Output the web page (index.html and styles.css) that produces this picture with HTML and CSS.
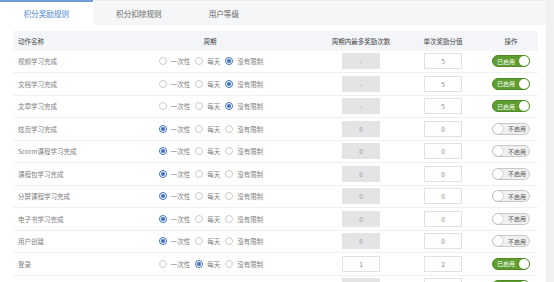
FILE: index.html
```html
<!DOCTYPE html>
<html lang="zh">
<head>
<meta charset="utf-8">
<link rel="stylesheet" href="styles.css">
</head>
<body>
<div class="page">
  <div class="main">
    <div class="tabs">
      <div class="tab active">积分奖励规则</div>
      <div class="tab">积分扣除规则</div>
      <div class="tab">用户等级</div>
    </div>
    <div class="content">
      <div class="table">
        <div class="row head">
          <div class="c-name">动作名称</div>
          <div class="c-center">周期</div>
          <div class="c-center">周期内最多奖励次数</div>
          <div class="c-center">单次奖励分值</div>
          <div class="c-center">操作</div>
        </div>

        <div class="row">
          <div class="c-name">视频学习完成</div>
          <div class="c-center radios"><span class="radio"></span><span>一次性</span><span class="radio"></span><span>每天</span><span class="radio on"></span><span>没有限制</span></div>
          <div class="c-center"><span class="box dis">-</span></div>
          <div class="c-center"><span class="box">5</span></div>
          <div class="c-center"><span class="switch on"><span class="lbl">已启用</span><span class="knob"></span></span></div>
        </div>
        <div class="row">
          <div class="c-name">文档学习完成</div>
          <div class="c-center radios"><span class="radio"></span><span>一次性</span><span class="radio"></span><span>每天</span><span class="radio on"></span><span>没有限制</span></div>
          <div class="c-center"><span class="box dis">-</span></div>
          <div class="c-center"><span class="box">5</span></div>
          <div class="c-center"><span class="switch on"><span class="lbl">已启用</span><span class="knob"></span></span></div>
        </div>
        <div class="row">
          <div class="c-name">文章学习完成</div>
          <div class="c-center radios"><span class="radio"></span><span>一次性</span><span class="radio"></span><span>每天</span><span class="radio on"></span><span>没有限制</span></div>
          <div class="c-center"><span class="box dis">-</span></div>
          <div class="c-center"><span class="box">5</span></div>
          <div class="c-center"><span class="switch on"><span class="lbl">已启用</span><span class="knob"></span></span></div>
        </div>
        <div class="row">
          <div class="c-name">炫页学习完成</div>
          <div class="c-center radios"><span class="radio on"></span><span>一次性</span><span class="radio"></span><span>每天</span><span class="radio"></span><span>没有限制</span></div>
          <div class="c-center"><span class="box dis">0</span></div>
          <div class="c-center"><span class="box">0</span></div>
          <div class="c-center"><span class="switch"><span class="knob"></span><span class="lbl">不启用</span></span></div>
        </div>
        <div class="row">
          <div class="c-name">Scorm课程学习完成</div>
          <div class="c-center radios"><span class="radio on"></span><span>一次性</span><span class="radio"></span><span>每天</span><span class="radio"></span><span>没有限制</span></div>
          <div class="c-center"><span class="box dis">0</span></div>
          <div class="c-center"><span class="box">0</span></div>
          <div class="c-center"><span class="switch"><span class="knob"></span><span class="lbl">不启用</span></span></div>
        </div>
        <div class="row">
          <div class="c-name">课程包学习完成</div>
          <div class="c-center radios"><span class="radio on"></span><span>一次性</span><span class="radio"></span><span>每天</span><span class="radio"></span><span>没有限制</span></div>
          <div class="c-center"><span class="box dis">0</span></div>
          <div class="c-center"><span class="box">0</span></div>
          <div class="c-center"><span class="switch"><span class="knob"></span><span class="lbl">不启用</span></span></div>
        </div>
        <div class="row">
          <div class="c-name">分屏课程学习完成</div>
          <div class="c-center radios"><span class="radio on"></span><span>一次性</span><span class="radio"></span><span>每天</span><span class="radio"></span><span>没有限制</span></div>
          <div class="c-center"><span class="box dis">0</span></div>
          <div class="c-center"><span class="box">0</span></div>
          <div class="c-center"><span class="switch"><span class="knob"></span><span class="lbl">不启用</span></span></div>
        </div>
        <div class="row">
          <div class="c-name">电子书学习完成</div>
          <div class="c-center radios"><span class="radio on"></span><span>一次性</span><span class="radio"></span><span>每天</span><span class="radio"></span><span>没有限制</span></div>
          <div class="c-center"><span class="box dis">0</span></div>
          <div class="c-center"><span class="box">0</span></div>
          <div class="c-center"><span class="switch"><span class="knob"></span><span class="lbl">不启用</span></span></div>
        </div>
        <div class="row">
          <div class="c-name">用户创建</div>
          <div class="c-center radios"><span class="radio on"></span><span>一次性</span><span class="radio"></span><span>每天</span><span class="radio"></span><span>没有限制</span></div>
          <div class="c-center"><span class="box dis">0</span></div>
          <div class="c-center"><span class="box">0</span></div>
          <div class="c-center"><span class="switch"><span class="knob"></span><span class="lbl">不启用</span></span></div>
        </div>
        <div class="row">
          <div class="c-name">登录</div>
          <div class="c-center radios"><span class="radio"></span><span>一次性</span><span class="radio on"></span><span>每天</span><span class="radio"></span><span>没有限制</span></div>
          <div class="c-center"><span class="box">1</span></div>
          <div class="c-center"><span class="box">2</span></div>
          <div class="c-center"><span class="switch on"><span class="lbl">已启用</span><span class="knob"></span></span></div>
        </div>
        <div class="row">
          <div class="c-name">签到</div>
          <div class="c-center radios"><span class="radio"></span><span>一次性</span><span class="radio on"></span><span>每天</span><span class="radio"></span><span>没有限制</span></div>
          <div class="c-center"><span class="box dis">-</span></div>
          <div class="c-center"><span class="box">1</span></div>
          <div class="c-center"><span class="switch on"><span class="lbl">已启用</span><span class="knob"></span></span></div>
        </div>
      </div>
    </div>
  </div>
  <div class="scroll"></div>
</div>
</body>
</html>
```

FILE: styles.css
```css
html, body {
  margin: 0;
  padding: 0;
  height: 100%;
  overflow: hidden;
  background: #ffffff;
  font-family: "Noto Sans CJK SC", "Noto Sans", sans-serif;
}

.page {
  display: flex;
  height: 282px;
  overflow: hidden;
}

.main {
  width: 546px;
  display: flex;
  flex-direction: column;
  overflow: hidden;
}

.scroll {
  flex: 1;
  background: #eff1f3;
}

.tabs {
  display: flex;
  flex-shrink: 0;
  height: 25px;
  background: #f5f6f8;
  border-top: 1px solid #eceef1;
  box-sizing: border-box;
}

.tab {
  padding: 0 23.5px;
  font-size: 7.6px;
  color: #666;
  display: flex;
  align-items: center;
  box-sizing: border-box;
}

.tab.active {
  background: #fff;
  color: #4a86cf;
  border-top: 2px solid #6f9dd6;
  margin-top: -1px;
}

.content {
  flex: 1 0 auto;
  background: #fff;
  padding: 5.5px 8px 0 13px;
}

.row {
  display: grid;
  grid-template-columns: 87px 220px 82px 82px 1fr;
  height: 22.5px;
  align-items: center;
  border-bottom: 1px solid #eef0f2;
  box-sizing: border-box;
  font-size: 6.5px;
  color: #808080;
}

.row.head {
  height: 20px;
  background: #f3f5f8;
  border-bottom: none;
  color: #444;
}

.c-name {
  padding-left: 5px;
  white-space: nowrap;
}

.c-center {
  display: flex;
  justify-content: center;
  align-items: center;
  white-space: nowrap;
}

.radios {
  gap: 4px;
  padding-left: 2px;
}

.radios span:nth-child(2),
.radios span:nth-child(4) {
  margin-right: 1px;
}

.radio {
  width: 8px;
  height: 8px;
  border: 1px solid #c9ccd1;
  border-radius: 50%;
  box-sizing: border-box;
  display: flex;
  align-items: center;
  justify-content: center;
  background: #fff;
}

.radio.on {
  border-color: #3d70bf;
}

.radio.on::after {
  content: "";
  width: 4px;
  height: 4px;
  border-radius: 50%;
  background: #3d6fbe;
}

.box {
  width: 38px;
  height: 16px;
  border: 1px solid #dfe1e4;
  box-sizing: border-box;
  display: flex;
  align-items: center;
  justify-content: center;
  color: #888;
  background: #fff;
}

.box.dis {
  background: #e4e4e4;
  border-color: #e4e4e4;
  color: #999;
}

.switch {
  width: 38px;
  height: 12px;
  border-radius: 6px;
  box-sizing: border-box;
  border: 1px solid #c8c8c8;
  background: #f0f0f0;
  display: flex;
  align-items: center;
  justify-content: space-between;
  padding: 0 3px 0 0;
  font-size: 6px;
  color: #555;
}

.switch .knob {
  width: 10px;
  height: 10px;
  border-radius: 50%;
  background: #fff;
  box-shadow: 0 0 0 0.5px #bbb;
}

.switch.on {
  background: #5d9e2f;
  border-color: #4f8a26;
  color: #fff;
  padding: 0 0 0 4px;
}

.switch.on .knob {
  box-shadow: none;
}
```
